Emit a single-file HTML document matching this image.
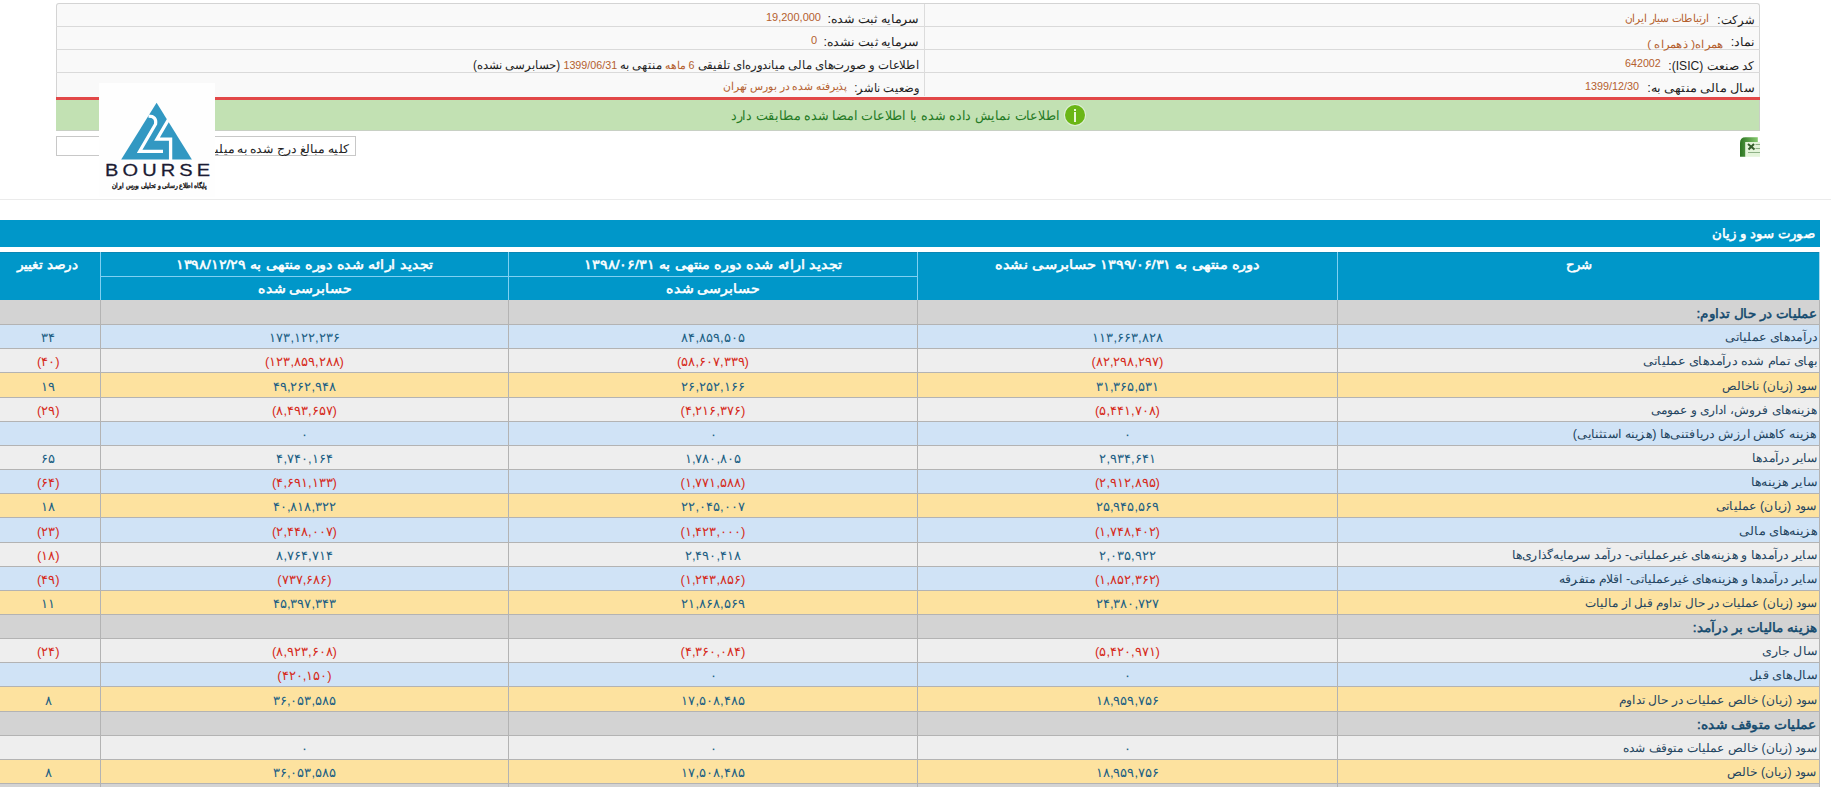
<!DOCTYPE html>
<html><head><meta charset="utf-8">
<style>
html,body{margin:0;padding:0;background:#fff;width:1831px;height:787px;overflow:hidden;position:relative;font-family:"Liberation Sans",sans-serif;}
.a{position:absolute;}
.t{position:absolute;white-space:nowrap;direction:rtl;line-height:1;}
.hl{position:absolute;left:56px;width:1704px;height:1px;background:#dadada;}
.row{position:absolute;left:0;width:1820px;}
</style></head><body>

<div class="a" style="left:56px;top:3px;width:1702px;height:93px;border:1px solid #d4d4d4;border-bottom:none;border-radius:3px 3px 0 0;background:#f9f9f9"></div>
<div class="hl" style="top:26px"></div>
<div class="hl" style="top:49px"></div>
<div class="hl" style="top:72px"></div>
<div class="a" style="left:924px;top:4px;width:1px;height:92px;background:#dcdcdc"></div>
<div class="a" style="left:56px;top:97px;width:1704px;height:3px;background:#e24848"></div>
<div class="a" style="left:56px;top:100px;width:1703px;height:30px;background:#c2e1b3;border-right:1px solid #c9cfc6;border-bottom:1px solid #c8d0c4"></div>
<div class="a" style="left:1065px;top:105px;width:20px;height:20px;border-radius:50%;background:#6ab615;box-shadow:0 0 0 1px rgba(255,255,255,0.45)"></div>
<div class="a" style="left:1074px;top:109px;width:2px;height:2px;background:#e9f7d8"></div>
<div class="a" style="left:1074px;top:112px;width:2px;height:10px;background:#e9f7d8"></div>
<div class="a" style="left:56px;top:136px;width:298px;height:18px;border:1px solid #c8c8c8;background:#fff"></div>
<svg class="a" style="left:1740px;top:137px" width="20" height="20" viewBox="0 0 20 20">
<defs><linearGradient id="xg" x1="0" x2="1" y1="0" y2="0"><stop offset="0" stop-color="#2c7521"/><stop offset="1" stop-color="#86c96f"/></linearGradient></defs>
<path d="M0 19.8 L0 6 Q0 0.3 5.5 0.3 L17.8 0.3 L17.8 5 L5.5 5 L5.5 19.8 Z" fill="url(#xg)"/>
<rect x="5.5" y="5" width="14.5" height="14.8" fill="#e4f4da"/>
<path d="M8 7 L14.5 12.5 M14 7 L8.5 12.5" stroke="#355f2c" stroke-width="2"/>
<path d="M15.5 7.5h4.5 M15.5 11.5h4.5 M8 15.5h12" stroke="#8fb287" stroke-width="1.2"/>
</svg>
<div class="a" style="left:0;top:199px;width:1831px;height:1px;background:#ebebeb"></div>
<div class="a" style="left:0;top:220px;width:1820px;height:27px;background:#0097c9"></div>
<div class="a" style="left:0;top:252px;width:1820px;height:48px;background:#0097c9"></div>
<div class="a" style="left:0;top:252px;width:1820px;height:1px;background:#0a86b4"></div>
<div class="a" style="left:100px;top:252px;width:1px;height:48px;background:#7fd0f2"></div>
<div class="a" style="left:508px;top:252px;width:1px;height:48px;background:#7fd0f2"></div>
<div class="a" style="left:917px;top:252px;width:1px;height:48px;background:#7fd0f2"></div>
<div class="a" style="left:1337px;top:252px;width:1px;height:48px;background:#7fd0f2"></div>
<div class="a" style="left:1819px;top:252px;width:1px;height:48px;background:#a9d9ec"></div>
<div class="a" style="left:100px;top:276px;width:817px;height:1px;background:#7fd0f2"></div>
<div class="row" style="top:300px;height:24px;background:#d3d3d3"></div>
<div class="row" style="top:324px;height:24px;background:#d0e3f6"></div>
<div class="row" style="top:324px;height:1px;background:#b3b3b3"></div>
<div class="row" style="top:348px;height:24px;background:#eeeeee"></div>
<div class="row" style="top:348px;height:1px;background:#b3b3b3"></div>
<div class="row" style="top:372px;height:25px;background:#fde29f"></div>
<div class="row" style="top:372px;height:1px;background:#b3b3b3"></div>
<div class="row" style="top:397px;height:24px;background:#eeeeee"></div>
<div class="row" style="top:397px;height:1px;background:#b3b3b3"></div>
<div class="row" style="top:421px;height:24px;background:#d0e3f6"></div>
<div class="row" style="top:421px;height:1px;background:#b3b3b3"></div>
<div class="row" style="top:445px;height:24px;background:#eeeeee"></div>
<div class="row" style="top:445px;height:1px;background:#b3b3b3"></div>
<div class="row" style="top:469px;height:24px;background:#d0e3f6"></div>
<div class="row" style="top:469px;height:1px;background:#b3b3b3"></div>
<div class="row" style="top:493px;height:24px;background:#fde29f"></div>
<div class="row" style="top:493px;height:1px;background:#b3b3b3"></div>
<div class="row" style="top:517px;height:25px;background:#d0e3f6"></div>
<div class="row" style="top:517px;height:1px;background:#b3b3b3"></div>
<div class="row" style="top:542px;height:24px;background:#eeeeee"></div>
<div class="row" style="top:542px;height:1px;background:#b3b3b3"></div>
<div class="row" style="top:566px;height:24px;background:#d0e3f6"></div>
<div class="row" style="top:566px;height:1px;background:#b3b3b3"></div>
<div class="row" style="top:590px;height:24px;background:#fde29f"></div>
<div class="row" style="top:590px;height:1px;background:#b3b3b3"></div>
<div class="row" style="top:614px;height:24px;background:#d3d3d3"></div>
<div class="row" style="top:614px;height:1px;background:#b3b3b3"></div>
<div class="row" style="top:638px;height:24px;background:#eeeeee"></div>
<div class="row" style="top:638px;height:1px;background:#b3b3b3"></div>
<div class="row" style="top:662px;height:24px;background:#d0e3f6"></div>
<div class="row" style="top:662px;height:1px;background:#b3b3b3"></div>
<div class="row" style="top:686px;height:25px;background:#fde29f"></div>
<div class="row" style="top:686px;height:1px;background:#b3b3b3"></div>
<div class="row" style="top:711px;height:24px;background:#d3d3d3"></div>
<div class="row" style="top:711px;height:1px;background:#b3b3b3"></div>
<div class="row" style="top:735px;height:24px;background:#eeeeee"></div>
<div class="row" style="top:735px;height:1px;background:#b3b3b3"></div>
<div class="row" style="top:759px;height:24px;background:#fde29f"></div>
<div class="row" style="top:759px;height:1px;background:#b3b3b3"></div>
<div class="row" style="top:783px;height:25px;background:#d3d3d3"></div>
<div class="row" style="top:783px;height:1px;background:#b3b3b3"></div>
<div class="a" style="left:100px;top:300px;width:1px;height:487px;background:#b3b3b3"></div>
<div class="a" style="left:508px;top:300px;width:1px;height:487px;background:#b3b3b3"></div>
<div class="a" style="left:917px;top:300px;width:1px;height:487px;background:#b3b3b3"></div>
<div class="a" style="left:1337px;top:300px;width:1px;height:487px;background:#b3b3b3"></div>
<div class="a" style="left:1819px;top:300px;width:1px;height:487px;background:#b3b3b3"></div>
<div class="t" style="right:77.00px;top:13.50px;font-size:12px;color:#1e1e1e;transform:scaleX(0.9650);transform-origin:right;">شرکت:</div>
<div class="t" style="right:121.70px;top:12.50px;font-size:11px;color:#b4602e;transform:scaleX(0.9589);transform-origin:right;">ارتباطات سیار ایران</div>
<div class="t" style="right:77.00px;top:35.50px;font-size:12px;color:#1e1e1e;transform:scaleX(1.0517);transform-origin:right;">نماد:</div>
<div class="t" style="right:107.70px;top:38.50px;font-size:11px;color:#b4602e;transform:scaleX(1.0517);transform-origin:right;">همراه( ذهمراه )</div>
<div class="t" style="right:77.00px;top:59.50px;font-size:12px;color:#1e1e1e;transform:scaleX(1.0075);transform-origin:right;">کد صنعت (ISIC):</div>
<div class="t" style="right:170.60px;top:58.00px;font-size:11px;color:#b4602e;transform:scaleX(0.9695);transform-origin:right;">642002</div>
<div class="t" style="right:77.00px;top:81.50px;font-size:12px;color:#1e1e1e;transform:scaleX(1.0771);transform-origin:right;">سال مالی منتهی به:</div>
<div class="t" style="right:192.20px;top:81.00px;font-size:11px;color:#b4602e;transform:scaleX(0.9807);transform-origin:right;">1399/12/30</div>
<div class="t" style="right:911.80px;top:13.00px;font-size:12px;color:#1e1e1e;transform:scaleX(1.0515);transform-origin:right;">سرمایه ثبت شده:</div>
<div class="t" style="right:1010.00px;top:12.30px;font-size:11px;color:#b4602e;">19,200,000</div>
<div class="t" style="right:911.80px;top:36.40px;font-size:12px;color:#1e1e1e;transform:scaleX(1.0504);transform-origin:right;">سرمایه ثبت نشده:</div>
<div class="t" style="right:1014.00px;top:35.20px;font-size:11px;color:#b4602e;">0</div>
<div class="t" style="right:911.80px;top:59.40px;font-size:12px;color:#1e1e1e;transform:scaleX(0.9760);transform-origin:right;">اطلاعات و صورت‌های مالی میاندوره‌ای تلفیقی <span style="color:#b4602e;font-size:11px">6 ماهه</span> منتهی به <span style="color:#b4602e;font-size:11px">1399/06/31</span> (حسابرسی نشده)</div>
<div class="t" style="right:911.80px;top:82.40px;font-size:12px;color:#1e1e1e;transform:scaleX(0.9538);transform-origin:right;">وضعیت ناشر:</div>
<div class="t" style="right:984.10px;top:81.20px;font-size:11px;color:#b4602e;transform:scaleX(0.9769);transform-origin:right;">پذیرفته شده در بورس تهران</div>
<div class="t" style="right:771.60px;top:109.00px;font-size:13px;color:#257a25;transform:scaleX(0.9771);transform-origin:right;">اطلاعات نمایش داده شده با اطلاعات امضا شده مطابقت دارد</div>
<div class="t" style="right:1482.00px;top:143.00px;font-size:12px;color:#1e1e1e;transform:scaleX(1.0400);transform-origin:right;">کلیه مبالغ درج شده به میلیون ریال</div>
<div class="t" style="right:16.60px;top:226.50px;-webkit-text-stroke:0.5px #fff;color:#fff;font-size:13px;transform:scaleX(1.0214);transform-origin:right;">صورت سود و زیان</div>
<div class="t" style="left:18.49px;top:258.00px;-webkit-text-stroke:0.5px #fff;color:#fff;font-size:13px;transform:scaleX(1.0507);transform-origin:center;">درصد تغییر</div>
<div class="t" style="left:188.05px;top:258.00px;-webkit-text-stroke:0.5px #fff;color:#fff;font-size:13px;transform:scaleX(1.1034);transform-origin:center;">تجدید ارائه شده دوره منتهی به ۱۳۹۸/۱۲/۲۹</div>
<div class="t" style="left:596.55px;top:258.00px;-webkit-text-stroke:0.5px #fff;color:#fff;font-size:13px;transform:scaleX(1.1077);transform-origin:center;">تجدید ارائه شده دوره منتهی به ۱۳۹۸/۰۶/۳۱</div>
<div class="t" style="left:1009.34px;top:258.00px;-webkit-text-stroke:0.5px #fff;color:#fff;font-size:13px;transform:scaleX(1.1214);transform-origin:center;">دوره منتهی به ۱۳۹۹/۰۶/۳۱ حسابرسی نشده</div>
<div class="t" style="left:1565.50px;top:258.00px;-webkit-text-stroke:0.5px #fff;color:#fff;font-size:13px;transform:scaleX(1.0154);transform-origin:center;">شرح</div>
<div class="t" style="left:261.69px;top:282.00px;-webkit-text-stroke:0.5px #fff;color:#fff;font-size:13px;transform:scaleX(1.0861);transform-origin:center;">حسابرسی شده</div>
<div class="t" style="left:670.19px;top:282.00px;-webkit-text-stroke:0.5px #fff;color:#fff;font-size:13px;transform:scaleX(1.0861);transform-origin:center;">حسابرسی شده</div>
<div class="t" style="right:14.00px;top:307.00px;font-size:13px;-webkit-text-stroke:0.5px #134a6e;color:#134a6e;transform:scaleX(1.0390);transform-origin:right;">عملیات در حال تداوم:</div>
<div class="t" style="right:14.00px;top:331.30px;font-size:12px;color:#1f4560;transform:scaleX(1.0533);transform-origin:right;">درآمدهای عملیاتی</div>
<div class="t" style="left:41.30px;top:331.30px;font-size:13px;color:#215f84;">۳۴</div>
<div class="t" style="left:269.38px;top:331.30px;font-size:13px;color:#215f84;">۱۷۳,۱۲۲,۲۳۶</div>
<div class="t" style="left:681.38px;top:331.30px;font-size:13px;color:#215f84;">۸۴,۸۵۹,۵۰۵</div>
<div class="t" style="left:1092.38px;top:331.30px;font-size:13px;color:#215f84;">۱۱۳,۶۶۳,۸۲۸</div>
<div class="t" style="right:14.00px;top:355.30px;font-size:12px;color:#1f4560;transform:scaleX(1.0718);transform-origin:right;">بهای تمام شده درآمدهای عملیاتی</div>
<div class="t" style="left:36.96px;top:355.30px;font-size:13px;color:#d62b20;">(۴۰)</div>
<div class="t" style="left:265.04px;top:355.30px;font-size:13px;color:#d62b20;">(۱۲۳,۸۵۹,۲۸۸)</div>
<div class="t" style="left:677.04px;top:355.30px;font-size:13px;color:#d62b20;">(۵۸,۶۰۷,۳۳۹)</div>
<div class="t" style="left:1091.54px;top:355.30px;font-size:13px;color:#d62b20;">(۸۲,۲۹۸,۲۹۷)</div>
<div class="t" style="right:14.00px;top:379.80px;font-size:12px;color:#1f4560;">سود (زیان) ناخالص</div>
<div class="t" style="left:41.30px;top:379.80px;font-size:13px;color:#215f84;">۱۹</div>
<div class="t" style="left:272.88px;top:379.80px;font-size:13px;color:#215f84;">۴۹,۲۶۲,۹۴۸</div>
<div class="t" style="left:681.38px;top:379.80px;font-size:13px;color:#215f84;">۲۶,۲۵۲,۱۶۶</div>
<div class="t" style="left:1095.88px;top:379.80px;font-size:13px;color:#215f84;">۳۱,۳۶۵,۵۳۱</div>
<div class="t" style="right:14.00px;top:404.30px;font-size:12px;color:#1f4560;transform:scaleX(1.0137);transform-origin:right;">هزینه‌های فروش، اداری و عمومی</div>
<div class="t" style="left:36.96px;top:404.30px;font-size:13px;color:#d62b20;">(۲۹)</div>
<div class="t" style="left:272.04px;top:404.30px;font-size:13px;color:#d62b20;">(۸,۴۹۳,۶۵۷)</div>
<div class="t" style="left:680.54px;top:404.30px;font-size:13px;color:#d62b20;">(۴,۲۱۶,۳۷۶)</div>
<div class="t" style="left:1095.04px;top:404.30px;font-size:13px;color:#d62b20;">(۵,۴۴۱,۷۰۸)</div>
<div class="t" style="right:14.00px;top:428.30px;font-size:12px;color:#1f4560;transform:scaleX(1.0524);transform-origin:right;">هزینه کاهش ارزش دریافتنی‌ها (هزینه استثنایی)</div>
<div class="t" style="left:301.00px;top:428.30px;font-size:13px;color:#215f84;">۰</div>
<div class="t" style="left:709.50px;top:428.30px;font-size:13px;color:#215f84;">۰</div>
<div class="t" style="left:1124.00px;top:428.30px;font-size:13px;color:#215f84;">۰</div>
<div class="t" style="right:14.00px;top:452.30px;font-size:12px;color:#1f4560;transform:scaleX(1.0293);transform-origin:right;">سایر درآمدها</div>
<div class="t" style="left:41.30px;top:452.30px;font-size:13px;color:#215f84;">۶۵</div>
<div class="t" style="left:276.38px;top:452.30px;font-size:13px;color:#215f84;">۴,۷۴۰,۱۶۴</div>
<div class="t" style="left:684.88px;top:452.30px;font-size:13px;color:#215f84;">۱,۷۸۰,۸۰۵</div>
<div class="t" style="left:1099.38px;top:452.30px;font-size:13px;color:#215f84;">۲,۹۳۴,۶۴۱</div>
<div class="t" style="right:14.00px;top:476.30px;font-size:12px;color:#1f4560;transform:scaleX(1.0514);transform-origin:right;">سایر هزینه‌ها</div>
<div class="t" style="left:36.96px;top:476.30px;font-size:13px;color:#d62b20;">(۶۴)</div>
<div class="t" style="left:272.04px;top:476.30px;font-size:13px;color:#d62b20;">(۴,۶۹۱,۱۳۳)</div>
<div class="t" style="left:680.54px;top:476.30px;font-size:13px;color:#d62b20;">(۱,۷۷۱,۵۸۸)</div>
<div class="t" style="left:1095.04px;top:476.30px;font-size:13px;color:#d62b20;">(۲,۹۱۲,۸۹۵)</div>
<div class="t" style="right:14.00px;top:500.30px;font-size:12px;color:#1f4560;transform:scaleX(1.0437);transform-origin:right;">سود (زیان) عملیاتی</div>
<div class="t" style="left:41.30px;top:500.30px;font-size:13px;color:#215f84;">۱۸</div>
<div class="t" style="left:272.88px;top:500.30px;font-size:13px;color:#215f84;">۴۰,۸۱۸,۳۲۲</div>
<div class="t" style="left:681.38px;top:500.30px;font-size:13px;color:#215f84;">۲۲,۰۴۵,۰۰۷</div>
<div class="t" style="left:1095.88px;top:500.30px;font-size:13px;color:#215f84;">۲۵,۹۴۵,۵۶۹</div>
<div class="t" style="right:14.00px;top:524.80px;font-size:12px;color:#1f4560;transform:scaleX(1.0782);transform-origin:right;">هزینه‌های مالی</div>
<div class="t" style="left:36.96px;top:524.80px;font-size:13px;color:#d62b20;">(۲۳)</div>
<div class="t" style="left:272.04px;top:524.80px;font-size:13px;color:#d62b20;">(۲,۴۴۸,۰۰۷)</div>
<div class="t" style="left:680.54px;top:524.80px;font-size:13px;color:#d62b20;">(۱,۴۲۳,۰۰۰)</div>
<div class="t" style="left:1095.04px;top:524.80px;font-size:13px;color:#d62b20;">(۱,۷۴۸,۴۰۲)</div>
<div class="t" style="right:14.00px;top:549.30px;font-size:12px;color:#1f4560;transform:scaleX(1.0420);transform-origin:right;">سایر درآمدها و هزینه‌های غیرعملیاتی- درآمد سرمایه‌گذاری‌ها</div>
<div class="t" style="left:36.96px;top:549.30px;font-size:13px;color:#d62b20;">(۱۸)</div>
<div class="t" style="left:276.38px;top:549.30px;font-size:13px;color:#215f84;">۸,۷۶۴,۷۱۴</div>
<div class="t" style="left:684.88px;top:549.30px;font-size:13px;color:#215f84;">۲,۴۹۰,۴۱۸</div>
<div class="t" style="left:1099.38px;top:549.30px;font-size:13px;color:#215f84;">۲,۰۳۵,۹۲۲</div>
<div class="t" style="right:14.00px;top:573.30px;font-size:12px;color:#1f4560;transform:scaleX(1.0361);transform-origin:right;">سایر درآمدها و هزینه‌های غیرعملیاتی- اقلام متفرقه</div>
<div class="t" style="left:36.96px;top:573.30px;font-size:13px;color:#d62b20;">(۴۹)</div>
<div class="t" style="left:277.34px;top:573.30px;font-size:13px;color:#d62b20;">(۷۳۷,۶۸۶)</div>
<div class="t" style="left:680.54px;top:573.30px;font-size:13px;color:#d62b20;">(۱,۲۴۳,۸۵۶)</div>
<div class="t" style="left:1095.04px;top:573.30px;font-size:13px;color:#d62b20;">(۱,۸۵۲,۳۶۲)</div>
<div class="t" style="right:14.00px;top:597.30px;font-size:12px;color:#1f4560;">سود (زیان) عملیات در حال تداوم قبل از مالیات</div>
<div class="t" style="left:41.30px;top:597.30px;font-size:13px;color:#215f84;">۱۱</div>
<div class="t" style="left:272.88px;top:597.30px;font-size:13px;color:#215f84;">۴۵,۳۹۷,۳۴۳</div>
<div class="t" style="left:681.38px;top:597.30px;font-size:13px;color:#215f84;">۲۱,۸۶۸,۵۶۹</div>
<div class="t" style="left:1095.88px;top:597.30px;font-size:13px;color:#215f84;">۲۴,۳۸۰,۷۲۷</div>
<div class="t" style="right:14.00px;top:621.00px;font-size:13px;-webkit-text-stroke:0.5px #134a6e;color:#134a6e;transform:scaleX(1.0439);transform-origin:right;">هزینه مالیات بر درآمد:</div>
<div class="t" style="right:14.00px;top:645.30px;font-size:12px;color:#1f4560;transform:scaleX(1.0507);transform-origin:right;">سال جاری</div>
<div class="t" style="left:36.96px;top:645.30px;font-size:13px;color:#d62b20;">(۲۴)</div>
<div class="t" style="left:272.04px;top:645.30px;font-size:13px;color:#d62b20;">(۸,۹۲۳,۶۰۸)</div>
<div class="t" style="left:680.54px;top:645.30px;font-size:13px;color:#d62b20;">(۴,۳۶۰,۰۸۴)</div>
<div class="t" style="left:1095.04px;top:645.30px;font-size:13px;color:#d62b20;">(۵,۴۲۰,۹۷۱)</div>
<div class="t" style="right:14.00px;top:669.30px;font-size:12px;color:#1f4560;transform:scaleX(1.0677);transform-origin:right;">سال‌های قبل</div>
<div class="t" style="left:277.34px;top:669.30px;font-size:13px;color:#d62b20;">(۴۲۰,۱۵۰)</div>
<div class="t" style="left:709.50px;top:669.30px;font-size:13px;color:#215f84;">۰</div>
<div class="t" style="left:1124.00px;top:669.30px;font-size:13px;color:#215f84;">۰</div>
<div class="t" style="right:14.00px;top:693.80px;font-size:12px;color:#1f4560;transform:scaleX(1.0196);transform-origin:right;">سود (زیان) خالص عملیات در حال تداوم</div>
<div class="t" style="left:44.80px;top:693.80px;font-size:13px;color:#215f84;">۸</div>
<div class="t" style="left:272.88px;top:693.80px;font-size:13px;color:#215f84;">۳۶,۰۵۳,۵۸۵</div>
<div class="t" style="left:681.38px;top:693.80px;font-size:13px;color:#215f84;">۱۷,۵۰۸,۴۸۵</div>
<div class="t" style="left:1095.88px;top:693.80px;font-size:13px;color:#215f84;">۱۸,۹۵۹,۷۵۶</div>
<div class="t" style="right:14.00px;top:718.00px;font-size:13px;-webkit-text-stroke:0.5px #134a6e;color:#134a6e;transform:scaleX(1.0616);transform-origin:right;">عملیات متوقف شده:</div>
<div class="t" style="right:14.00px;top:742.30px;font-size:12px;color:#1f4560;transform:scaleX(1.0143);transform-origin:right;">سود (زیان) خالص عملیات متوقف شده</div>
<div class="t" style="left:301.00px;top:742.30px;font-size:13px;color:#215f84;">۰</div>
<div class="t" style="left:709.50px;top:742.30px;font-size:13px;color:#215f84;">۰</div>
<div class="t" style="left:1124.00px;top:742.30px;font-size:13px;color:#215f84;">۰</div>
<div class="t" style="right:14.00px;top:766.30px;font-size:12px;color:#1f4560;transform:scaleX(1.0254);transform-origin:right;">سود (زیان) خالص</div>
<div class="t" style="left:44.80px;top:766.30px;font-size:13px;color:#215f84;">۸</div>
<div class="t" style="left:272.88px;top:766.30px;font-size:13px;color:#215f84;">۳۶,۰۵۳,۵۸۵</div>
<div class="t" style="left:681.38px;top:766.30px;font-size:13px;color:#215f84;">۱۷,۵۰۸,۴۸۵</div>
<div class="t" style="left:1095.88px;top:766.30px;font-size:13px;color:#215f84;">۱۸,۹۵۹,۷۵۶</div>
<div class="a" style="left:99px;top:83px;width:116px;height:114px;background:#fefefe"></div>
<svg class="a" style="left:99px;top:83px" width="116" height="114" viewBox="0 0 116 114">
<polygon points="57.6,19.8 22.2,76.5 92.9,76.5" fill="#3298c2"/>
<path d="M49.5,33.2 Q57.8,33.2 56.6,41 L40.6,68.4 L64,68.4" fill="none" stroke="#fff" stroke-width="3.2"/>
<path d="M69.5,36.5 L58,56.2 L71.6,56.2 L71.6,77" fill="none" stroke="#fff" stroke-width="3.3"/>
<text transform="translate(6,92.7) scale(1.25,1)" x="0" y="0" font-family="Liberation Sans" font-size="16" stroke="#1b1b33" stroke-width="0.25" fill="#1b1b33" letter-spacing="3.3">BOURSE</text>
<text transform="translate(108,104.8) scale(0.84,1)" x="0" y="0" font-family="Liberation Sans" font-size="6.6" stroke="#222" stroke-width="0.45" fill="#222" direction="rtl" text-anchor="start">پایگاه اطلاع رسانی و تحلیلی بورس ایران</text>
</svg>
</body></html>
